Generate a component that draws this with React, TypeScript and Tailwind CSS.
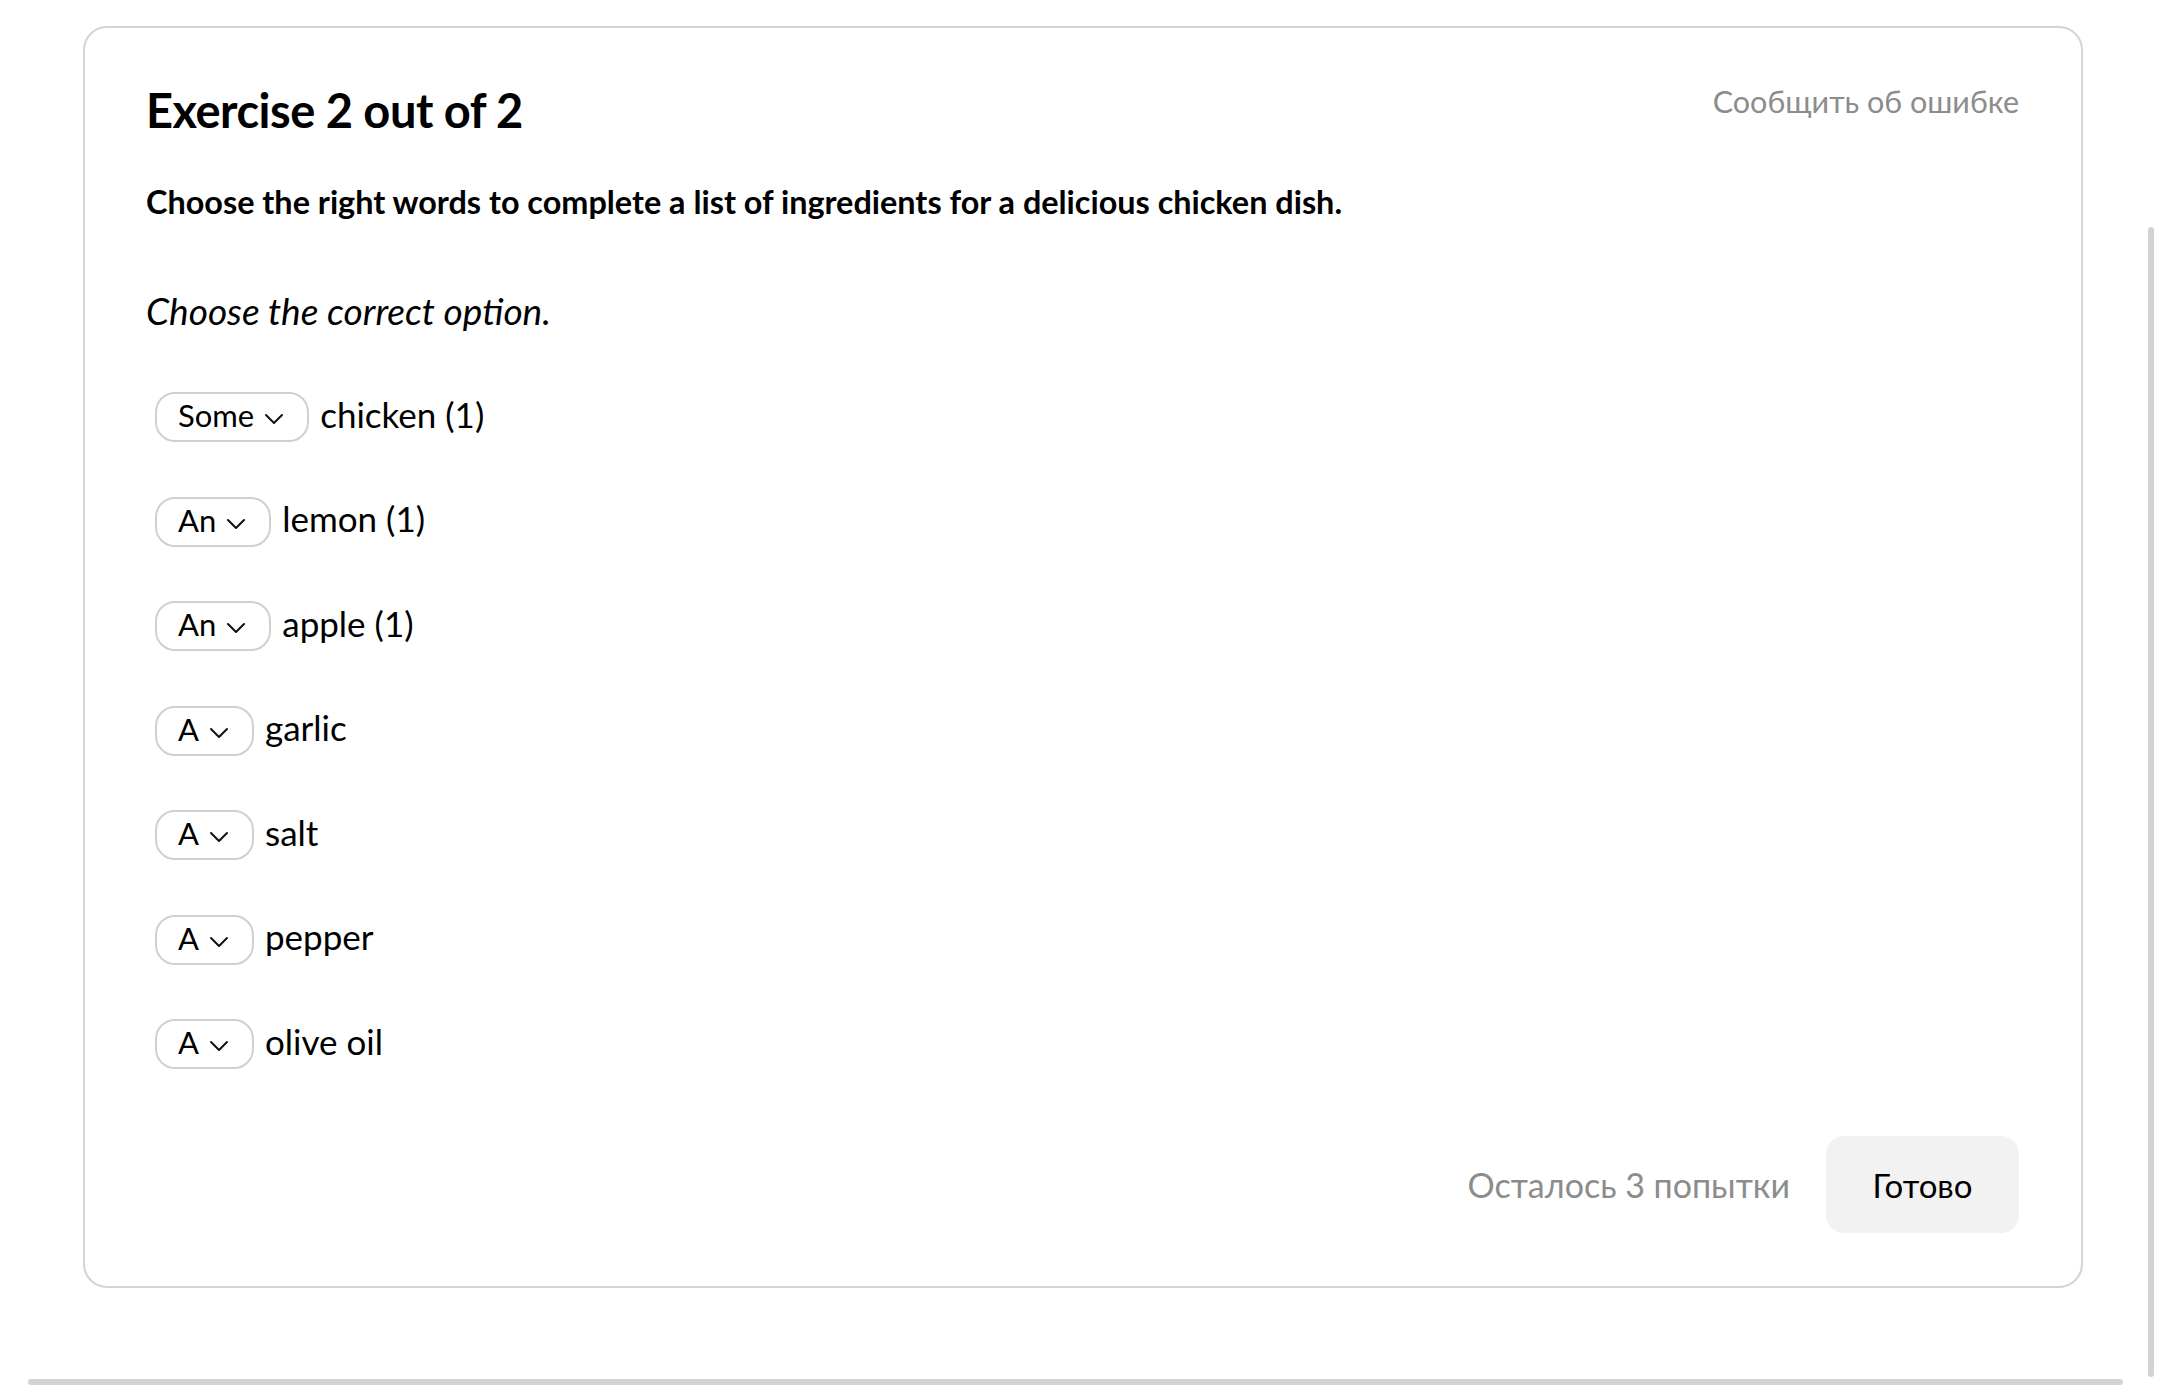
import React from "react";

const rows = [
  { opt: "Some", text: "chicken (1)" },
  { opt: "An", text: "lemon (1)" },
  { opt: "An", text: "apple (1)" },
  { opt: "A", text: "garlic" },
  { opt: "A", text: "salt" },
  { opt: "A", text: "pepper" },
  { opt: "A", text: "olive oil" },
];

function Chevron() {
  return (
    <svg width="20" height="12" viewBox="0 0 20 12" fill="none" className="shrink-0 mt-[4px]">
      <polyline points="2,2 10,10 18,2" stroke="#111" strokeWidth="2" strokeLinecap="round" strokeLinejoin="round" />
    </svg>
  );
}

export default function App() {
  return (
    <div
      className="relative w-[2160px] h-[1391px] bg-white overflow-hidden text-black"
      style={{ fontFamily: "Lato, 'Open Sans', Roboto, sans-serif" }}
    >
      <div className="pl-[83px] pt-[26px] w-[2083px]">
        <div className="border-2 border-[#d4d4d4] rounded-[24px] pl-[61px] pr-[62px] pt-[52px] pb-[53px]">
          <div className="flex items-start justify-between">
            <h1 className="text-[47px] leading-[60px] font-bold tracking-[-0.5px]">Exercise 2 out of 2</h1>
            <a className="text-[30.5px] leading-[40px] text-[#8c8c8c] mt-[1px]">Сообщить об ошибке</a>
          </div>
          <p className="mt-[40px] text-[32.4px] leading-[44px] font-bold">
            Choose the right words to complete a list of ingredients for a delicious chicken dish.
          </p>
          <p className="mt-[63px] text-[37px] leading-[48px] italic">Choose the correct option.</p>
          <div className="mt-[57px] pl-[9px] flex flex-col gap-[54.5px]">
            {rows.map((r, i) => (
              <div key={i} className="flex items-center gap-[11px] h-[50px]">
                <div className="flex items-center gap-[10px] h-[50px] border-2 border-[#d0d0d0] rounded-[20px] pl-[21px] pr-[23px]">
                  <span className="text-[31px] leading-[40px] pb-[4px]">{r.opt}</span>
                  <Chevron />
                </div>
                <span className="text-[35px] leading-[44px] pb-[7px]">{r.text}</span>
              </div>
            ))}
          </div>
          <div className="mt-[67px] flex items-center justify-end gap-[36px]">
            <span className="text-[34px] leading-[44px] text-[#8c8c8c]">Осталось 3 попытки</span>
            <button className="w-[193px] h-[97px] rounded-[18px] bg-[#f2f2f2] text-[33px] leading-[44px] text-black">
              Готово
            </button>
          </div>
        </div>
      </div>
      <div className="absolute left-[28px] top-[1379px] w-[2095px] h-[6px] rounded-full bg-[#d3d3d3]" />
      <div className="absolute left-[2148px] top-[227px] w-[6px] h-[1150px] rounded-full bg-[#d3d3d3]" />
    </div>
  );
}
